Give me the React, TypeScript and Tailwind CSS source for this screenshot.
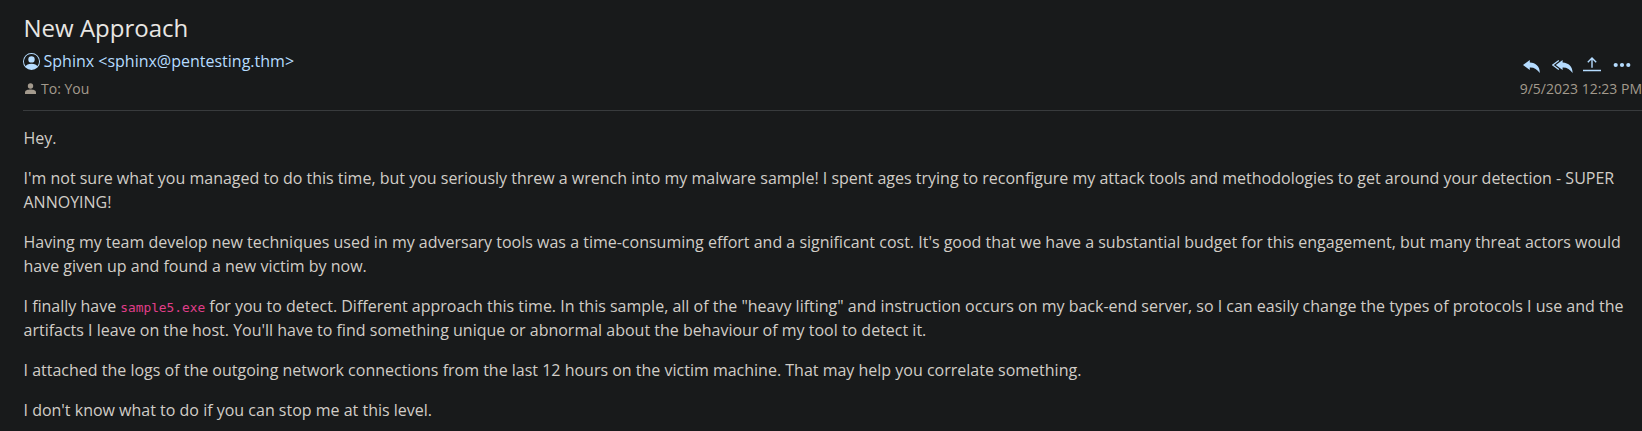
import React from "react";
import { BsPersonCircle } from "react-icons/bs";

const replyHead = "M6.8 0 0 5l6.8 5V7.4C11 7.2 14.2 9 16.8 13 16.9 6.8 13 2.9 6.8 2.6z";

function Reply() {
  return (
    <svg viewBox="0 0 17 14" className="h-[14px] w-[17px]" fill="currentColor">
      <path d={replyHead} />
    </svg>
  );
}

function ReplyAll() {
  return (
    <svg viewBox="0 0 21 14" className="h-[14px] w-[21px]" fill="currentColor">
      <path transform="translate(3.8 0)" d={replyHead} />
      <path d="M6.8.5.8 5l6 4.5" fill="none" stroke="currentColor" strokeWidth="1.2" />
    </svg>
  );
}

function Upload() {
  return (
    <svg viewBox="0 0 18 16" className="h-4 w-[18px]" fill="none" stroke="currentColor" strokeWidth="1.4">
      <path d="M9 10.8V1M4.8 5.2 9 1l4.2 4.2M0 13.5h18" />
    </svg>
  );
}

function Dots() {
  return (
    <svg viewBox="0 0 18 6" className="h-[6px] w-[18px]" fill="currentColor">
      <circle cx="2.7" cy="3" r="2.1" />
      <circle cx="9" cy="3" r="2.1" />
      <circle cx="15.3" cy="3" r="2.1" />
    </svg>
  );
}

function Recipient() {
  return (
    <svg viewBox="0 0 11 12" className="h-3 w-[11px]" fill="currentColor">
      <circle cx="5.5" cy="3" r="2.7" />
      <path d="M0 11V9.6C0 7.4 2.6 6.6 5.5 6.6S11 7.4 11 9.6V11z" />
    </svg>
  );
}

export default function App() {
  return (
    <main className="h-[431px] w-[1642px] overflow-hidden bg-[#181a1b] pl-[23px] font-['Open_Sans',sans-serif] text-[16px] leading-6 text-[#d1cdc7]">
      <header className="flex h-[111px] justify-between border-b border-[#383b3d] pt-[10px]">
        <div>
          <h1 className="pl-[0.5px] text-[24px] leading-[36px] text-[#e8e6e3]">New Approach</h1>
          <div className="mt-[3px] flex items-center gap-[3.5px] text-[#b5dcff]">
            <BsPersonCircle className="size-[17px]" />
            <span>Sphinx &lt;sphinx@pentesting.thm&gt;</span>
          </div>
          <div className="mt-1 flex items-center gap-[5px] pl-[2px] text-[14px] text-[#a39a8d]">
            <span className="-mt-px"><Recipient /></span>
            <span>To: You</span>
          </div>
        </div>
        <div className="pt-[46px]">
          <div className="flex h-[18px] items-start pt-px text-[#b5dcff]">
            <span className="ml-[3px] pt-[3px]"><Reply /></span>
            <span className="ml-3 pt-[3px]"><ReplyAll /></span>
            <span className="ml-[10px]"><Upload /></span>
            <span className="ml-3 pt-[5px]"><Dots /></span>
          </div>
          <time className="mt-[3px] block text-[14px] text-[#a39a8d]">9/5/2023 12:23 PM</time>
        </div>
      </header>
      <article className="space-y-4 pt-[15px] pl-[0.5px]">
        <p>Hey.</p>
        <p className="whitespace-nowrap">I'm not sure what you managed to do this time, but you seriously threw a wrench into my malware sample! I spent ages trying to reconfigure my attack tools and methodologies to get around your detection - SUPER<br />ANNOYING!</p>
        <p className="whitespace-nowrap">Having my team develop new techniques used in my adversary tools was a time-consuming effort and a significant cost. It's good that we have a substantial budget for this engagement, but many threat actors would<br />have given up and found a new victim by now.</p>
        <p className="whitespace-nowrap">I finally have <code className="font-['DejaVu_Sans_Mono',monospace] text-[12.8px] leading-none text-[#e03e8a]">sample5.exe</code> for you to detect. Different approach this time. In this sample, all of the "heavy lifting" and instruction occurs on my back-end server, so I can easily change the types of protocols I use and the<br />artifacts I leave on the host. You'll have to find something unique or abnormal about the behaviour of my tool to detect it.</p>
        <p>I attached the logs of the outgoing network connections from the last 12 hours on the victim machine. That may help you correlate something.</p>
        <p>I don't know what to do if you can stop me at this level.</p>
      </article>
    </main>
  );
}
